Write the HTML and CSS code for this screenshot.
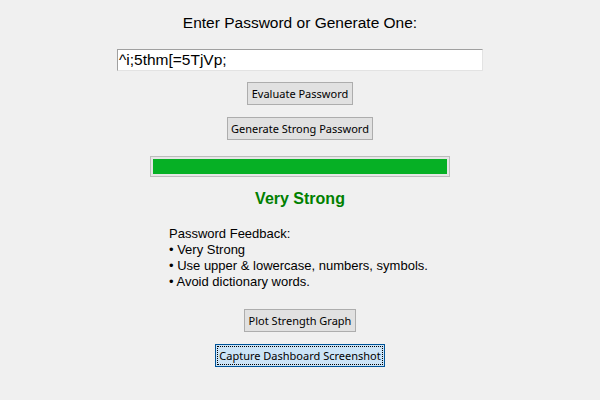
FILE: index.html
```html
<!DOCTYPE html>
<html>
<head>
<meta charset="utf-8">
<link rel="stylesheet" href="styles.css">
</head>
<body>
<div class="app">
  <div class="title">Enter Password or Generate One:</div>
  <div class="entry">^i;5thm[=5TjVp;</div>
  <button class="btn btn-eval">Evaluate Password</button>
  <button class="btn btn-gen">Generate Strong Password</button>
  <div class="progress"><div class="fill" style="width:100%"></div></div>
  <div class="strength">Very Strong</div>
  <div class="feedback">
    <div>Password Feedback:</div>
    <div>• Very Strong</div>
    <div>• Use upper &amp; lowercase, numbers, symbols.</div>
    <div>• Avoid dictionary words.</div>
  </div>
  <button class="btn btn-plot">Plot Strength Graph</button>
  <button class="btn btn-cap focused"><span class="ring">Capture Dashboard Screenshot</span></button>
</div>
</body>
</html>
```
FILE: styles.css
```css
html, body {
  margin: 0;
  padding: 0;
  background: #f0f0f0;
  width: 600px;
  height: 400px;
  overflow: hidden;
}
.app {
  display: flex;
  flex-direction: column;
  align-items: center;
  font-family: "Liberation Sans", Arial, sans-serif;
  color: #000;
}
.title {
  margin-top: 14px;
  font-size: 15.5px;
  line-height: 18px;
  height: 18px;
}
.entry {
  margin-top: 17px;
  box-sizing: border-box;
  width: 366px;
  height: 22px;
  background: #fff;
  border: 1px solid #a0a0a0;
  border-right-color: #e3e3e3;
  border-bottom-color: #e3e3e3;
  font-size: 15.5px;
  line-height: 18px;
  padding: 1px 1px;
  text-align: left;
}
.btn {
  box-sizing: border-box;
  height: 23px;
  background: #e1e1e1;
  border: 1px solid #adadad;
  font-family: "Noto Sans", "DejaVu Sans", sans-serif;
  font-size: 11px;
  white-space: nowrap;
  color: #000;
  padding: 0;
  margin: 0;
  line-height: 20px;
}
.btn-eval { margin-top: 11px; width: 106px; }
.btn-gen { margin-top: 12px; width: 146px; }
.progress {
  margin-top: 16px;
  box-sizing: border-box;
  width: 300px;
  height: 21px;
  border: 1px solid #bcbcbc;
  background: #e6e6e6;
  padding: 2px;
}
.fill {
  height: 100%;
  background: #06b025;
}
.strength {
  margin-top: 11px;
  font-size: 16px;
  font-weight: bold;
  line-height: 22px;
  color: #008000;
}
.feedback {
  margin-top: 16px;
  align-self: flex-start;
  margin-left: 169px;
  font-size: 13px;
  line-height: 16px;
}
.btn-plot { margin-top: 19px; width: 112px; }
.btn-cap {
  margin-top: 12px;
  width: 170px;
  background: #cce4f7;
  border-color: #005499;
  padding: 1px;
}
.ring {
  display: block;
  height: 100%;
  box-sizing: border-box;
  border: 1px dotted #000;
  line-height: 17px;
}
```
